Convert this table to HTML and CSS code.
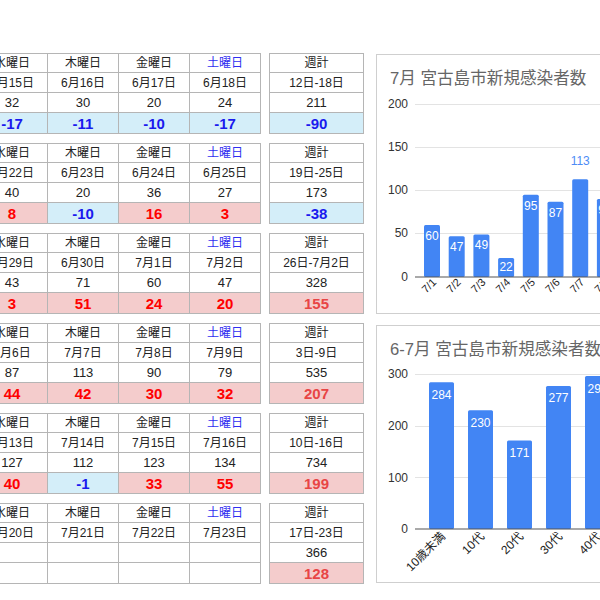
FILE: index.html
```html
<!DOCTYPE html>
<html lang="ja">
<head>
<meta charset="utf-8">
<title>宮古島市 新規感染者数</title>
<link rel="stylesheet" href="styles.css">
</head>
<body>
<div class="page">
  <div class="tables">
    <div class="block">
      <div class="grid days">
        <div class="c">水曜日</div><div class="c">木曜日</div><div class="c">金曜日</div><div class="c sat">土曜日</div>
        <div class="c">6月15日</div><div class="c">6月16日</div><div class="c">6月17日</div><div class="c">6月18日</div>
        <div class="c v">32</div><div class="c v">30</div><div class="c v">20</div><div class="c v">24</div>
        <div class="c d neg">-17</div><div class="c d neg">-11</div><div class="c d neg">-10</div><div class="c d neg">-17</div>
      </div>
      <div class="grid week">
        <div class="c">週計</div><div class="c">12日-18日</div><div class="c v">211</div><div class="c d neg">-90</div>
      </div>
    </div>
    <div class="block">
      <div class="grid days">
        <div class="c">水曜日</div><div class="c">木曜日</div><div class="c">金曜日</div><div class="c sat">土曜日</div>
        <div class="c">6月22日</div><div class="c">6月23日</div><div class="c">6月24日</div><div class="c">6月25日</div>
        <div class="c v">40</div><div class="c v">20</div><div class="c v">36</div><div class="c v">27</div>
        <div class="c d pos">8</div><div class="c d neg">-10</div><div class="c d pos">16</div><div class="c d pos">3</div>
      </div>
      <div class="grid week">
        <div class="c">週計</div><div class="c">19日-25日</div><div class="c v">173</div><div class="c d neg">-38</div>
      </div>
    </div>
    <div class="block">
      <div class="grid days">
        <div class="c">水曜日</div><div class="c">木曜日</div><div class="c">金曜日</div><div class="c sat">土曜日</div>
        <div class="c">6月29日</div><div class="c">6月30日</div><div class="c">7月1日</div><div class="c">7月2日</div>
        <div class="c v">43</div><div class="c v">71</div><div class="c v">60</div><div class="c v">47</div>
        <div class="c d pos">3</div><div class="c d pos">51</div><div class="c d pos">24</div><div class="c d pos">20</div>
      </div>
      <div class="grid week">
        <div class="c">週計</div><div class="c">26日-7月2日</div><div class="c v">328</div><div class="c d pos">155</div>
      </div>
    </div>
    <div class="block">
      <div class="grid days">
        <div class="c">水曜日</div><div class="c">木曜日</div><div class="c">金曜日</div><div class="c sat">土曜日</div>
        <div class="c">7月6日</div><div class="c">7月7日</div><div class="c">7月8日</div><div class="c">7月9日</div>
        <div class="c v">87</div><div class="c v">113</div><div class="c v">90</div><div class="c v">79</div>
        <div class="c d pos">44</div><div class="c d pos">42</div><div class="c d pos">30</div><div class="c d pos">32</div>
      </div>
      <div class="grid week">
        <div class="c">週計</div><div class="c">3日-9日</div><div class="c v">535</div><div class="c d pos">207</div>
      </div>
    </div>
    <div class="block">
      <div class="grid days">
        <div class="c">水曜日</div><div class="c">木曜日</div><div class="c">金曜日</div><div class="c sat">土曜日</div>
        <div class="c">7月13日</div><div class="c">7月14日</div><div class="c">7月15日</div><div class="c">7月16日</div>
        <div class="c v">127</div><div class="c v">112</div><div class="c v">123</div><div class="c v">134</div>
        <div class="c d pos">40</div><div class="c d neg">-1</div><div class="c d pos">33</div><div class="c d pos">55</div>
      </div>
      <div class="grid week">
        <div class="c">週計</div><div class="c">10日-16日</div><div class="c v">734</div><div class="c d pos">199</div>
      </div>
    </div>
    <div class="block">
      <div class="grid days">
        <div class="c">水曜日</div><div class="c">木曜日</div><div class="c">金曜日</div><div class="c sat">土曜日</div>
        <div class="c">7月20日</div><div class="c">7月21日</div><div class="c">7月22日</div><div class="c">7月23日</div>
        <div class="c v"></div><div class="c v"></div><div class="c v"></div><div class="c v"></div>
        <div class="c d"></div><div class="c d"></div><div class="c d"></div><div class="c d"></div>
      </div>
      <div class="grid week">
        <div class="c">週計</div><div class="c">17日-23日</div><div class="c v">366</div><div class="c d pos">128</div>
      </div>
    </div>
  </div>

  <div class="charts">
    <div class="panel p1">
      <svg class="chart" width="300" height="258" viewBox="0 0 300 258">
        <text class="title" x="13" y="29">7月 宮古島市新規感染者数</text>
        <g class="ylab">
          <text x="31" y="53">200</text>
          <text x="31" y="96">150</text>
          <text x="31" y="139">100</text>
          <text x="31" y="182">50</text>
          <text x="31" y="226">0</text>
        </g>
        <g class="grid-l">
          <line x1="38" y1="49.5" x2="300" y2="49.5"/>
          <line x1="38" y1="92.5" x2="300" y2="92.5"/>
          <line x1="38" y1="135.5" x2="300" y2="135.5"/>
          <line x1="38" y1="178.5" x2="300" y2="178.5"/>
        </g>
        <g class="bars">
          <rect x="47" y="170.1" width="16" height="51.9" rx="1.5"/>
          <rect x="71.7" y="181.3" width="16" height="40.7" rx="1.5"/>
          <rect x="96.4" y="179.6" width="16" height="42.4" rx="1.5"/>
          <rect x="121.1" y="203" width="16" height="19" rx="1.5"/>
          <rect x="145.8" y="139.8" width="16" height="82.2" rx="1.5"/>
          <rect x="170.5" y="146.7" width="16" height="75.3" rx="1.5"/>
          <rect x="195.2" y="124.3" width="16" height="97.7" rx="1.5"/>
          <rect x="219.9" y="144.1" width="16" height="77.9" rx="1.5"/>
          <rect x="244.6" y="153.7" width="16" height="68.3" rx="1.5"/>
        </g>
        <line class="axis" x1="38" y1="222" x2="300" y2="222"/>
        <g class="blab">
          <text x="55" y="185">60</text>
          <text x="79.7" y="196">47</text>
          <text x="104.4" y="194">49</text>
          <text x="129.1" y="216">22</text>
          <text x="153.8" y="155">95</text>
          <text x="178.5" y="162">87</text>
          <text x="227.9" y="159">90</text>
          <text x="252.6" y="169">79</text>
        </g>
        <text class="olab" x="203.2" y="110">113</text>
        <g class="xlab">
          <text transform="translate(60,228) rotate(-45)">7/1</text>
          <text transform="translate(84.7,228) rotate(-45)">7/2</text>
          <text transform="translate(109.4,228) rotate(-45)">7/3</text>
          <text transform="translate(134.1,228) rotate(-45)">7/4</text>
          <text transform="translate(158.8,228) rotate(-45)">7/5</text>
          <text transform="translate(183.5,228) rotate(-45)">7/6</text>
          <text transform="translate(208.2,228) rotate(-45)">7/7</text>
          <text transform="translate(232.9,228) rotate(-45)">7/8</text>
          <text transform="translate(257.6,228) rotate(-45)">7/9</text>
        </g>
      </svg>
    </div>
    <div class="panel p2">
      <svg class="chart" width="300" height="256" viewBox="0 0 300 256">
        <text class="title" x="13" y="29">6-7月 宮古島市新規感染者数</text>
        <g class="ylab">
          <text x="31" y="52">300</text>
          <text x="31" y="104">200</text>
          <text x="31" y="156">100</text>
          <text x="31" y="207">0</text>
        </g>
        <g class="grid-l">
          <line x1="38" y1="48.5" x2="300" y2="48.5"/>
          <line x1="38" y1="100.5" x2="300" y2="100.5"/>
          <line x1="38" y1="151.5" x2="300" y2="151.5"/>
        </g>
        <g class="bars">
          <rect x="52" y="56.3" width="25" height="146.7" rx="1.5"/>
          <rect x="91" y="84.2" width="25" height="118.8" rx="1.5"/>
          <rect x="130" y="114.6" width="25" height="88.4" rx="1.5"/>
          <rect x="169" y="59.9" width="25" height="143.1" rx="1.5"/>
          <rect x="208" y="50.1" width="25" height="152.9" rx="1.5"/>
        </g>
        <line class="axis" x1="38" y1="203" x2="300" y2="203"/>
        <g class="blab">
          <text x="64.5" y="73">284</text>
          <text x="103.5" y="101">230</text>
          <text x="142.5" y="131">171</text>
          <text x="181.5" y="76">277</text>
          <text x="220.5" y="67">296</text>
        </g>
        <g class="xlab x2">
          <text transform="translate(69,211) rotate(-45)">10歳未満</text>
          <text transform="translate(108,211) rotate(-45)">10代</text>
          <text transform="translate(147,211) rotate(-45)">20代</text>
          <text transform="translate(186,211) rotate(-45)">30代</text>
          <text transform="translate(225,211) rotate(-45)">40代</text>
        </g>
      </svg>
    </div>
  </div>
</div>
</body>
</html>
```

FILE: styles.css
```css
html, body {
  margin: 0;
  padding: 0;
  background: #ffffff;
  overflow: hidden;
}

body {
  font-family: "Liberation Sans", Arial, "Noto Sans CJK JP", sans-serif;
  color: #222222;
}

.page {
  display: flex;
  align-items: flex-start;
  padding-top: 53px;
  margin-left: -24px;
  width: 700px;
}

.tables {
  display: flex;
  flex-direction: column;
  gap: 9px;
  flex-shrink: 0;
}

.block {
  display: flex;
  align-items: flex-start;
  gap: 8px;
}

.grid {
  display: grid;
  gap: 1px;
  background: #b5b5b5;
  border: 1px solid #b5b5b5;
  grid-template-rows: 18px 19px 19px 20px;
}

.days {
  grid-template-columns: repeat(4, 70px);
}

.week {
  grid-template-columns: 93px;
}

.c {
  background: #ffffff;
  display: flex;
  align-items: center;
  justify-content: center;
  font-size: 12px;
  line-height: 1;
  color: #222222;
  white-space: nowrap;
}

.v {
  font-size: 13px;
}

.d {
  font-size: 15px;
  font-weight: bold;
}

.sat {
  color: #2f2ff0;
}

.neg {
  background: #d4eef9;
  color: #1a1aee;
}

.pos {
  background: #f4cccc;
  color: #ff0000;
}

.week .pos {
  color: #e84545;
}

.charts {
  display: flex;
  flex-direction: column;
  gap: 11px;
  margin-left: 12px;
  padding-top: 1px;
  flex-shrink: 0;
}

.panel {
  width: 300px;
  border: 1px solid #cfcfcf;
  background: #ffffff;
}

.p1 {
  height: 258px;
}

.p2 {
  height: 256px;
}

.chart {
  display: block;
  font-family: "Liberation Sans", Arial, "Noto Sans CJK JP", sans-serif;
}

.title {
  font-size: 16.6px;
  fill: #666666;
}

.ylab text {
  font-size: 12px;
  fill: #333333;
  text-anchor: end;
}

.grid-l line {
  stroke: #e3e3e3;
  stroke-width: 1;
}

.axis {
  stroke: #555555;
  stroke-width: 1.2;
}

.bars rect {
  fill: #4285f4;
}

.blab text {
  font-size: 12px;
  fill: #ffffff;
  text-anchor: middle;
}

.olab {
  font-size: 12px;
  fill: #4e8cf5;
  text-anchor: middle;
}

.xlab text {
  font-size: 11px;
  fill: #222222;
  text-anchor: end;
}

.x2 text {
  font-size: 12px;
}
```
